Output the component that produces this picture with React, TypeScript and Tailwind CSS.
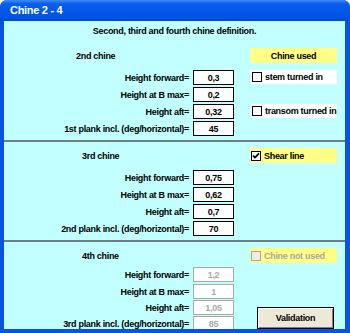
import React from "react";

// Chine 2-4 dialog: three chine sections, each with four height/plank rows.

const FONT = "font-['Liberation_Sans',Arial,sans-serif]";

function Check({ checked, disabled }: { checked?: boolean; disabled?: boolean }) {
  return (
    <span
      className={`flex h-[10px] w-[10px] shrink-0 items-center justify-center border ${
        disabled ? "border-[#a8a8a8] bg-[#ececec]" : "border-black bg-white"
      }`}
    >
      {checked && (
        <svg width="8" height="8" viewBox="0 0 8 8">
          <path d="M1 3.6 L3 5.6 L7 1.4" stroke="#000" strokeWidth="1.7" fill="none" />
        </svg>
      )}
    </span>
  );
}

function Row({
  label,
  value,
  gap,
  disabled,
}: {
  label: string;
  value: string;
  gap: string;
  disabled?: boolean;
}) {
  return (
    <div className={`flex h-[15px] items-center ${gap}`}>
      <span className="w-[185px] text-right">{label}</span>
      <span
        className={`ml-[4px] flex h-[15px] w-[41px] items-center justify-center border bg-white ${
          disabled ? "border-[#a8a8a8] text-[#a8a8a8]" : "border-black"
        }`}
      >
        {value}
      </span>
    </div>
  );
}

function Option({ label, first }: { label: string; first?: boolean }) {
  return (
    <div className={`flex h-[14px] items-center bg-white pl-[2px] ${first ? "mt-[7px]" : "mt-[3px]"}`}>
      <Check />
      <span className="ml-[3px]">{label}</span>
    </div>
  );
}

type RowData = { label: string; value: string };

function Section({
  title,
  indent,
  rows,
  gaps,
  disabled,
  right,
}: {
  title: string;
  indent: string;
  rows: RowData[];
  gaps: string[];
  disabled?: boolean;
  right: React.ReactNode;
}) {
  return (
    <div className="flex">
      <div className="w-[230px]">
        <div className={`flex h-[15px] items-center ${indent}`}>{title}</div>
        {rows.map((r, i) => (
          <Row key={r.label} label={r.label} value={r.value} gap={gaps[i]} disabled={disabled} />
        ))}
      </div>
      <div className="ml-[16px] w-[87px]">{right}</div>
    </div>
  );
}

function Separator() {
  return <div className="mb-[6px] mt-[4px] h-[2px] bg-[#6c7f86]" />;
}

const GAPS = ["mt-[7px]", "mt-[2px]", "mt-[2px]", "mt-[2px]"];

export default function App() {
  return (
    <div className={`${FONT} flex h-[333px] w-[350px] flex-col overflow-hidden rounded-t-[7px] bg-[#0853e0]`}>
      <div className="flex h-[21px] shrink-0 items-center bg-[linear-gradient(to_bottom,#3d8cf7_0%,#0a5cec_18%,#0057e6_55%,#0454e2_85%,#0048cc_100%)] pl-[10px] text-[11px] font-bold tracking-[-0.3px] text-white">
        Chine 2 - 4
      </div>
      <div className="ml-[4px] h-[308px] w-[341px] shrink-0 overflow-hidden bg-[#c2ffff] text-[9px] font-bold leading-[12px] tracking-[-0.3px] text-black">
        <div className="h-[27px] pt-[4px] text-center">Second, third and fourth chine definition.</div>

        <Section
          title="2nd chine"
          indent="pl-[72px]"
          gaps={GAPS}
          rows={[
            { label: "Height forward=", value: "0,3" },
            { label: "Height at B max=", value: "0,2" },
            { label: "Height aft=", value: "0,32" },
            { label: "1st plank incl. (deg/horizontal)=", value: "45" },
          ]}
          right={
            <>
              <div className="flex h-[15px] items-center justify-center bg-[#ffff88]">Chine used</div>
              <Option label="stem turned in" first />
              <div className="mt-[3px] h-[14px]" />
              <Option label="transom turned in" />
            </>
          }
        />

        <Separator />

        <Section
          title="3rd chine"
          indent="pl-[78px]"
          gaps={GAPS}
          rows={[
            { label: "Height forward=", value: "0,75" },
            { label: "Height at B max=", value: "0,62" },
            { label: "Height aft=", value: "0,7" },
            { label: "2nd plank incl. (deg/horizontal)=", value: "70" },
          ]}
          right={
            <div className="flex h-[15px] items-center bg-[#ffff88] pl-[1px]">
              <Check checked />
              <span className="ml-[3px]">Shear line</span>
            </div>
          }
        />

        <Separator />

        <Section
          title="4th chine"
          indent="pl-[78px]"
          disabled
          gaps={["mt-[4px]", "mt-[2px]", "mt-[1px]", "mt-[1px]"]}
          rows={[
            { label: "Height forward=", value: "1,2" },
            { label: "Height at B max=", value: "1" },
            { label: "Height aft=", value: "1,05" },
            { label: "3rd plank incl. (deg/horizontal)=", value: "85" },
          ]}
          right={
            <>
              <div className="flex h-[15px] items-center bg-[#ffff88] pl-[1px] text-[#a8a8a8]">
                <Check disabled />
                <span className="ml-[3px]">Chine not used</span>
              </div>
              <button className="ml-[7px] mt-[44px] flex h-[22px] w-[77px] items-center justify-center border border-black bg-[#ece9d8] text-[9px] font-bold tracking-[-0.3px] shadow-[inset_1px_1px_#ffffff,inset_-1px_-1px_#808080]">
                Validation
              </button>
            </>
          }
        />
      </div>
    </div>
  );
}
